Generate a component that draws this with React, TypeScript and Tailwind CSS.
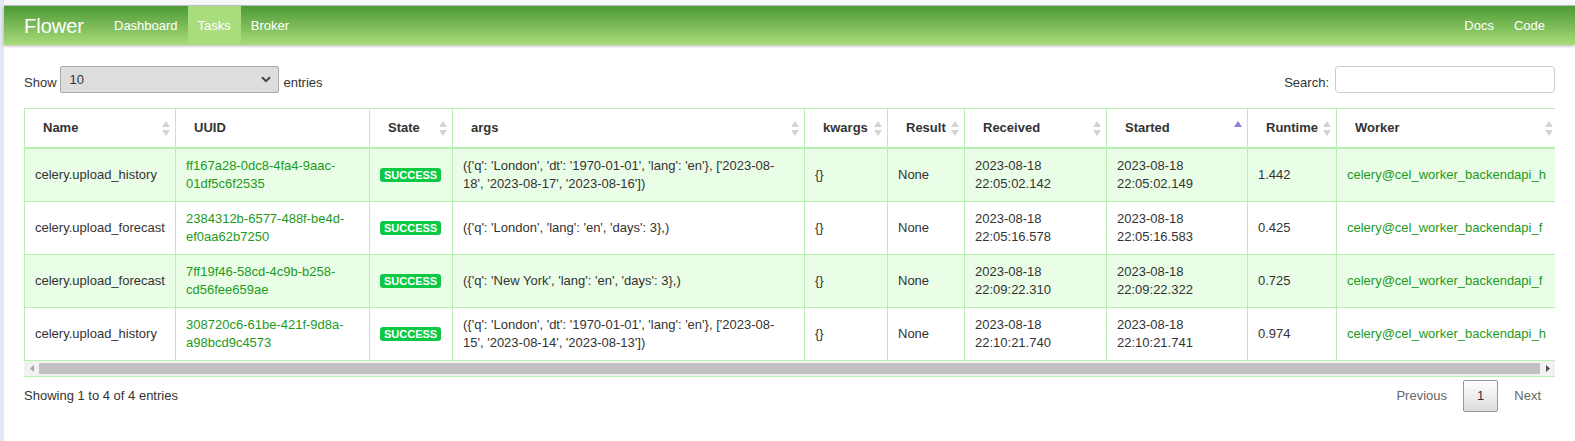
import type { ReactNode } from 'react'

type Task = {
  name: string
  uuid: string
  args: string
  received: string
  started: string
  runtime: string
  worker: string
}

const tasks: Array<Task> = [
  {
    name: 'celery.upload_history',
    uuid: 'ff167a28-0dc8-4fa4-9aac-01df5c6f2535',
    args: "({'q': 'London', 'dt': '1970-01-01', 'lang': 'en'}, ['2023-08-18', '2023-08-17', '2023-08-16'])",
    received: '2023-08-18 22:05:02.142',
    started: '2023-08-18 22:05:02.149',
    runtime: '1.442',
    worker: 'celery@cel_worker_backendapi_h',
  },
  {
    name: 'celery.upload_forecast',
    uuid: '2384312b-6577-488f-be4d-ef0aa62b7250',
    args: "({'q': 'London', 'lang': 'en', 'days': 3},)",
    received: '2023-08-18 22:05:16.578',
    started: '2023-08-18 22:05:16.583',
    runtime: '0.425',
    worker: 'celery@cel_worker_backendapi_f',
  },
  {
    name: 'celery.upload_forecast',
    uuid: '7ff19f46-58cd-4c9b-b258-cd56fee659ae',
    args: "({'q': 'New York', 'lang': 'en', 'days': 3},)",
    received: '2023-08-18 22:09:22.310',
    started: '2023-08-18 22:09:22.322',
    runtime: '0.725',
    worker: 'celery@cel_worker_backendapi_f',
  },
  {
    name: 'celery.upload_history',
    uuid: '308720c6-61be-421f-9d8a-a98bcd9c4573',
    args: "({'q': 'London', 'dt': '1970-01-01', 'lang': 'en'}, ['2023-08-15', '2023-08-14', '2023-08-13'])",
    received: '2023-08-18 22:10:21.740',
    started: '2023-08-18 22:10:21.741',
    runtime: '0.974',
    worker: 'celery@cel_worker_backendapi_h',
  },
]

// sort: 'none' = no icon, 'both' = gray arrows, 'asc' = purple up arrow
const columns: Array<{ label: string; width: number; sort: 'none' | 'both' | 'asc' }> = [
  { label: 'Name', width: 151, sort: 'both' },
  { label: 'UUID', width: 194, sort: 'none' },
  { label: 'State', width: 83, sort: 'both' },
  { label: 'args', width: 352, sort: 'both' },
  { label: 'kwargs', width: 83, sort: 'both' },
  { label: 'Result', width: 77, sort: 'both' },
  { label: 'Received', width: 142, sort: 'both' },
  { label: 'Started', width: 141, sort: 'asc' },
  { label: 'Runtime', width: 89, sort: 'both' },
  { label: 'Worker', width: 222, sort: 'both' },
]

const SortIcon = ({ sort }: { sort: 'both' | 'asc' }) => (
  <svg width="8" height="15" viewBox="0 0 8 15" className="shrink-0">
    <polygon points="4,0 8,6 0,6" fill={sort === 'asc' ? '#8a80d8' : '#d4d4d4'} />
    {sort === 'both' && <polygon points="0,9 8,9 4,15" fill="#d4d4d4" />}
  </svg>
)

const NavItem = ({ children, active }: { children: ReactNode; active?: boolean }) => (
  <a className={`flex h-full items-center px-[10px] text-[13px] text-white ${active ? 'bg-[#a9dc7b]' : ''}`}>
    {children}
  </a>
)

const Cell = ({ children }: { children: ReactNode }) => (
  <td className="border border-[#b9efb2] px-[10px] py-[8px] align-middle leading-[18px]">{children}</td>
)

export default function App() {
  return (
    <div className="flex min-h-screen bg-white font-['Liberation_Sans',Arial,sans-serif] text-[13px] text-[#333]">
      <div className="w-[4px] shrink-0 bg-[#e2e8f3]" />
      <div className="min-w-0 flex-1">
        <div className="h-[6px] border-b border-[#c6c9cc] bg-[#f6f7f9]" />
        <nav className="flex h-[39px] items-center bg-gradient-to-b from-[#4b9a35] to-[#a8dc7a] px-[20px] shadow-[0_1px_3px_rgba(0,0,0,0.3)]">
          <span className="w-[80px] text-[20px] text-white">Flower</span>
          <div className="flex h-full">
            <NavItem>Dashboard</NavItem>
            <NavItem active>Tasks</NavItem>
            <NavItem>Broker</NavItem>
          </div>
          <div className="ml-auto flex h-full">
            <NavItem>Docs</NavItem>
            <NavItem>Code</NavItem>
          </div>
        </nav>

        <main className="px-[20px] pt-[21px]">
          <div className="flex items-center justify-between">
            <div className="flex items-center">
              <span className="pt-[7px] leading-[18px]">Show</span>
              <div className="ml-[3px] flex h-[27px] w-[219px] items-center justify-between rounded-[2px] border border-[#a9a9a9] bg-[#dddddd] pl-[9px] pr-[7px]">
                <span>10</span>
                <svg width="10" height="7" viewBox="0 0 10 7">
                  <path d="M1 1.2 L5 5.2 L9 1.2" fill="none" stroke="#444" strokeWidth="2" />
                </svg>
              </div>
              <span className="ml-[5px] pt-[7px] leading-[18px]">entries</span>
            </div>
            <div className="flex items-center">
              <span className="pt-[7px] leading-[18px]">Search:</span>
              <div className="ml-[6px] h-[27px] w-[220px] rounded-[4px] border border-[#cccccc] bg-white" />
            </div>
          </div>

          <div className="mt-[15px] border-b border-[#b9efb2]">
            <div className="overflow-hidden">
              <table className="w-[1534px] table-fixed border-collapse">
                <colgroup>
                  {columns.map((c) => (
                    <col key={c.label} style={{ width: c.width }} />
                  ))}
                </colgroup>
                <thead>
                  <tr>
                    {columns.map((c) => (
                      <th
                        key={c.label}
                        className="border border-b-2 border-[#b9efb2] py-[10px] pl-[18px] pr-[5px] text-left font-bold leading-[18px]"
                      >
                        <div className="flex items-center justify-between">
                          <span>{c.label}</span>
                          {c.sort !== 'none' && <SortIcon sort={c.sort} />}
                        </div>
                      </th>
                    ))}
                  </tr>
                </thead>
                <tbody>
                  {tasks.map((t, i) => (
                    <tr key={t.uuid} className={i % 2 === 0 ? 'bg-[#eafde6]' : 'bg-white'}>
                      <Cell>{t.name}</Cell>
                      <Cell>
                        <a className="text-[#1d9a22]">{t.uuid}</a>
                      </Cell>
                      <Cell>
                        <span className="inline-block rounded-[3px] bg-[#0bc944] px-[4px] text-[11px] font-bold leading-[14px] text-white">
                          SUCCESS
                        </span>
                      </Cell>
                      <Cell>{t.args}</Cell>
                      <Cell>{'{}'}</Cell>
                      <Cell>None</Cell>
                      <Cell>{t.received}</Cell>
                      <Cell>{t.started}</Cell>
                      <Cell>{t.runtime}</Cell>
                      <Cell>
                        <a className="whitespace-nowrap text-[#1d9a22]">{t.worker}</a>
                      </Cell>
                    </tr>
                  ))}
                </tbody>
              </table>
            </div>
            {/* horizontal scrollbar of the table */}
            <div className="flex h-[15px] bg-[#f1f1f1]">
              <div className="flex w-[15px] items-center justify-center">
                <svg width="4" height="7" viewBox="0 0 4 7">
                  <polygon points="4,0 4,7 0,3.5" fill="#a3a3a3" />
                </svg>
              </div>
              <div className="flex-1 py-[2px]">
                <div className="h-full w-full rounded-[1px] bg-[#c1c1c1]" />
              </div>
              <div className="flex w-[15px] items-center justify-center">
                <svg width="4" height="7" viewBox="0 0 4 7">
                  <polygon points="0,0 4,3.5 0,7" fill="#505050" />
                </svg>
              </div>
            </div>
          </div>

          <div className="mt-[3px] flex h-[32px] items-center justify-between">
            <span>Showing 1 to 4 of 4 entries</span>
            <div className="flex h-full items-center">
              <span className="border border-transparent px-[13px] text-[#666]">Previous</span>
              <span className="ml-[2px] flex h-full items-center rounded-[2px] border border-[#979797] bg-gradient-to-b from-white to-[#dcdcdc] px-[13px]">
                1
              </span>
              <span className="ml-[2px] border border-transparent px-[13px] text-[#666]">Next</span>
            </div>
          </div>
        </main>
      </div>
    </div>
  )
}
